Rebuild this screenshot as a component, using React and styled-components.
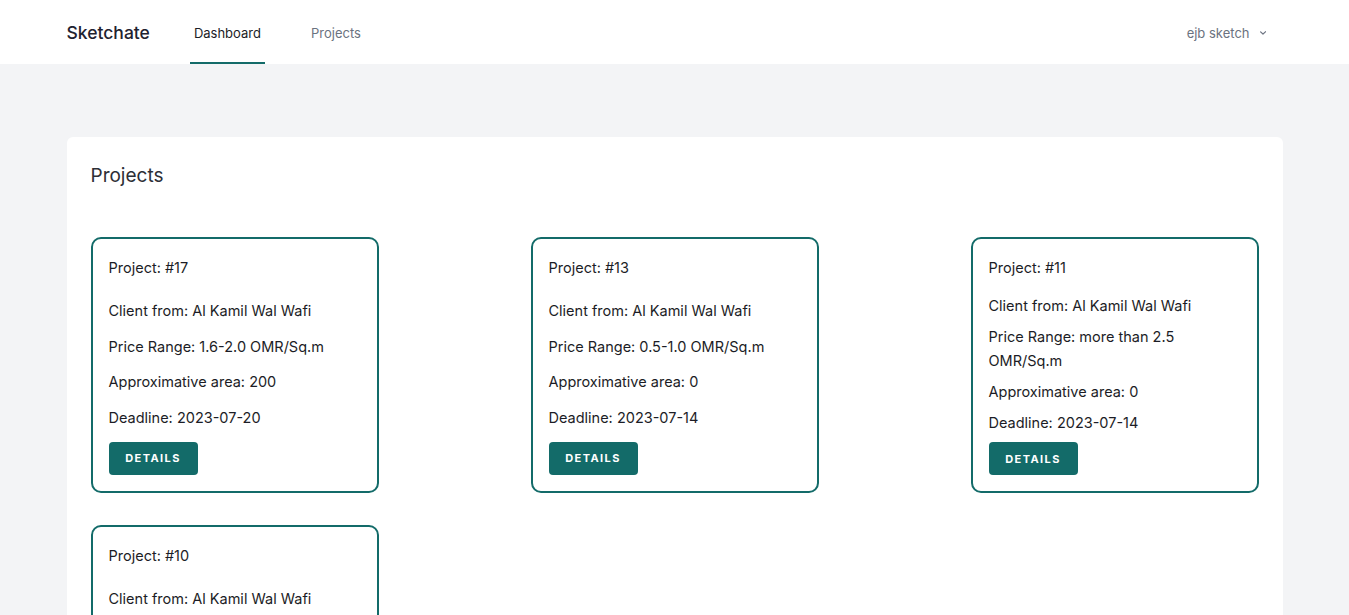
import styled, { createGlobalStyle } from "styled-components"

const GlobalStyle = createGlobalStyle`
  html {
    scrollbar-width: none;
  }
  html::-webkit-scrollbar {
    display: none;
  }
  body {
    margin: 0;
    background: #f3f4f6;
    font-family: Inter, "Noto Sans", sans-serif;
    color: #1c1d26;
  }
  * {
    box-sizing: border-box;
  }
`

const Header = styled.header`
  height: 64px;
  background: #fff;
`

const HeaderInner = styled.div`
  max-width: 1216px;
  height: 100%;
  margin: 0 auto;
  display: flex;
  align-items: stretch;
  justify-content: space-between;
`

const Left = styled.div`
  display: flex;
  align-items: stretch;
  gap: 40px;
`

const Brand = styled.div`
  display: flex;
  align-items: center;
  font-size: 17.5px;
  font-weight: 500;
  color: #1f2230;
`

const Nav = styled.nav`
  display: flex;
  align-items: stretch;
  gap: 42px;
`

const NavItem = styled.a`
  display: flex;
  align-items: center;
  padding: 4px 4px 0;
  font-size: 13px;
  color: ${(p) => (p.active ? "#1c1d26" : "#6b7280")};
  border-bottom: 2px solid ${(p) => (p.active ? "#136b69" : "transparent")};
  text-decoration: none;
`

const UserMenu = styled.div`
  display: flex;
  align-items: center;
  gap: 7px;
  padding: 2px 14px 0 0;
  font-size: 13px;
  color: #6b7280;
`

const Main = styled.main`
  max-width: 1216px;
  margin: 73px auto 0;
`

const Panel = styled.section`
  background: #fff;
  border-radius: 6px;
  padding: 25px 24px 32px;
`

const PanelTitle = styled.h2`
  margin: 0 0 47px;
  font-size: 19px;
  line-height: 28px;
  font-weight: 400;
  color: #2d2f36;
`

const Grid = styled.div`
  display: grid;
  grid-template-columns: repeat(3, 288px);
  grid-auto-rows: 1fr;
  justify-content: space-between;
  row-gap: 32px;
`

const Card = styled.div`
  border: 2px solid #136b69;
  border-radius: 10px;
  padding: 17px 16px 16px;
  display: flex;
  flex-direction: column;
  justify-content: space-between;
  gap: 7px;
`

const CardTitle = styled.div`
  font-size: 14.5px;
  line-height: 24px;
  margin-bottom: 7px;
`

const Line = styled.div`
  font-size: 14.5px;
  line-height: 24px;
`

const Button = styled.button`
  align-self: flex-start;
  height: 33px;
  width: 89px;
  border: none;
  border-radius: 4px;
  background: #136b69;
  color: #fff;
  font-family: inherit;
  font-size: 11px;
  font-weight: 700;
  letter-spacing: 1.4px;
  cursor: pointer;
`

const projects = [
  { id: 17, price: "1.6-2.0 OMR/Sq.m", area: 200, deadline: "2023-07-20" },
  { id: 13, price: "0.5-1.0 OMR/Sq.m", area: 0, deadline: "2023-07-14" },
  { id: 11, price: "more than 2.5 OMR/Sq.m", area: 0, deadline: "2023-07-14" },
  { id: 10, price: "0.5-1.0 OMR/Sq.m", area: 0, deadline: "2023-07-14" },
]

function App() {
  return (
    <>
      <GlobalStyle />
      <Header>
        <HeaderInner>
          <Left>
            <Brand>Sketchate</Brand>
            <Nav>
              <NavItem active>Dashboard</NavItem>
              <NavItem>Projects</NavItem>
            </Nav>
          </Left>
          <UserMenu>
            ejb sketch
            <svg width="12" height="12" viewBox="0 0 20 20" fill="#6b7280">
              <path d="M5.3 7.3a1 1 0 0 1 1.4 0L10 10.6l3.3-3.3a1 1 0 1 1 1.4 1.4l-4 4a1 1 0 0 1-1.4 0l-4-4a1 1 0 0 1 0-1.4z" />
            </svg>
          </UserMenu>
        </HeaderInner>
      </Header>
      <Main>
        <Panel>
          <PanelTitle>Projects</PanelTitle>
          <Grid>
            {projects.map((p) => (
              <Card key={p.id}>
                <CardTitle>Project: #{p.id}</CardTitle>
                <Line>Client from: Al Kamil Wal Wafi</Line>
                <Line>Price Range: {p.price}</Line>
                <Line>Approximative area: {p.area}</Line>
                <Line>Deadline: {p.deadline}</Line>
                <Button>DETAILS</Button>
              </Card>
            ))}
          </Grid>
        </Panel>
      </Main>
    </>
  )
}

export default App
